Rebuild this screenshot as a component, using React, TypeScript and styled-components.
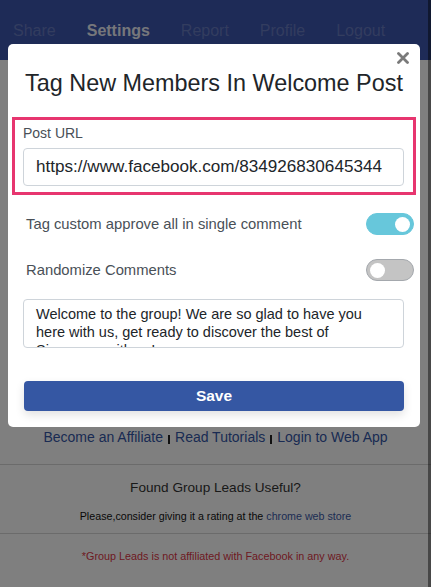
import React, { useState } from "react";
import styled, { createGlobalStyle } from "styled-components";

const GlobalStyle = createGlobalStyle`
  html, body {
    margin: 0;
    padding: 0;
    background: #ffffff;
  }
  body {
    font-family: "Liberation Sans", Arial, sans-serif;
    color: #212529;
    overflow: hidden;
  }
  * {
    box-sizing: border-box;
  }
`;

const Page = styled.div`
  width: 431px;
  height: 587px;
  position: relative;
  background: #ffffff;
`;

const NavBar = styled.nav`
  height: 60px;
  background: #3c56ae;
  display: flex;
  align-items: flex-end;
  padding: 0 0 20px 13px;
`;

const NavItem = styled.a<{ $active?: boolean }>`
  font-size: 16px;
  line-height: 18px;
  font-weight: ${(p) => (p.$active ? 700 : 400)};
  color: ${(p) => (p.$active ? "rgba(255, 255, 255, 0.92)" : "rgba(255, 255, 255, 0.22)")};
  text-decoration: none;
  margin-right: 31px;
`;

const PageBody = styled.main`
  padding-top: 367px;
  display: flex;
  flex-direction: column;
  align-items: center;
`;

const LinkRow = styled.div`
  font-size: 14px;
  display: flex;
  align-items: center;
  gap: 5px;
  height: 20px;
`;

const FooterLink = styled.a`
  color: #3456a6;
  text-decoration: none;
`;

const Divider = styled.span`
  display: inline-block;
  width: 2px;
  height: 9px;
  background: #222;
  margin-top: 5px;
`;

const Section = styled.section`
  width: 100%;
  border-top: 1px solid #d6d6d6;
  margin-top: 17px;
  padding: 14px 0 9px;
  text-align: center;
`;

const SectionTitle = styled.h3`
  margin: 0;
  font-size: 13.6px;
  font-weight: 400;
  color: #333;
  line-height: 17px;
`;

const SectionText = styled.p`
  margin: 12px 0 0;
  font-size: 10.7px;
  font-weight: 500;
  color: #111;
  line-height: 16px;
`;

const StoreLink = styled.a`
  color: #3a5aa8;
  text-decoration: none;
`;

const Disclaimer = styled.section`
  width: 100%;
  border-top: 1px solid #d6d6d6;
  padding-top: 16px;
  text-align: center;
  font-size: 10.8px;
  line-height: 13px;
  color: #dc3545;
`;

const Backdrop = styled.div`
  position: absolute;
  inset: 0;
  background: rgba(0, 0, 0, 0.5);
  border-right: 3px solid rgba(0, 0, 0, 0.44);
`;

const Modal = styled.div`
  position: absolute;
  left: 8px;
  top: 44px;
  width: 412px;
  height: 383px;
  background: #ffffff;
  border-radius: 5px;
  padding: 4px 4px 0;
  display: flex;
  flex-direction: column;
`;

const CloseRow = styled.div`
  display: flex;
  justify-content: flex-end;
  height: 20px;
  padding-right: 5px;
`;

const CloseButton = styled.button`
  border: none;
  background: none;
  padding: 0;
  width: 16px;
  height: 20px;
  display: flex;
  align-items: center;
  justify-content: center;
  cursor: pointer;
`;

const Title = styled.h2`
  margin: 1px 0 0;
  text-align: center;
  font-size: 23.4px;
  font-weight: 400;
  line-height: 28px;
  color: #212529;
`;

const Highlight = styled.div`
  margin-top: 20px;
  border: 3px solid #e7356f;
  padding: 3px 9px 6px 8px;
  height: 78px;
`;

const Label = styled.label`
  display: block;
  font-size: 14px;
  color: #495057;
  line-height: 20px;
`;

const TextInput = styled.input`
  display: block;
  width: 100%;
  height: 38px;
  margin-top: 5px;
  border: 1px solid #ced4da;
  border-radius: 4px;
  padding: 0 12px;
  font-family: inherit;
  font-size: 17.1px;
  color: #212529;
  outline: none;
`;

const Body = styled.div`
  padding: 0 2px 0 11px;
  display: flex;
  flex-direction: column;
`;

const ToggleRow = styled.div<{ $top: number }>`
  margin-top: ${(p) => p.$top}px;
  display: flex;
  align-items: center;
  justify-content: space-between;
  height: 22px;
  padding-left: 3px;
`;

const ToggleLabel = styled.span`
  font-size: 14.8px;
  color: #495057;
`;

const Switch = styled.button<{ $on: boolean }>`
  width: 48px;
  height: 22px;
  border-radius: 11px;
  border: 1.5px solid ${(p) => (p.$on ? "#67c7db" : "#a4a8ad")};
  background: ${(p) => (p.$on ? "#67c7db" : "#c4c4c4")};
  padding: 0 3px;
  display: flex;
  align-items: center;
  justify-content: ${(p) => (p.$on ? "flex-end" : "flex-start")};
  cursor: pointer;
`;

const Knob = styled.span`
  width: 15px;
  height: 15px;
  border-radius: 50%;
  background: #ffffff;
`;

const TextArea = styled.textarea`
  margin-top: 18px;
  width: 381px;
  height: 49px;
  border: 1px solid #ced4da;
  border-radius: 4px;
  padding: 5px 12px;
  font-family: inherit;
  font-size: 14.5px;
  line-height: 18px;
  color: #212529;
  resize: none;
  overflow: hidden;
  outline: none;
`;

const SaveButton = styled.button`
  margin-top: 33px;
  width: 380px;
  height: 30px;
  margin-left: 1px;
  border: none;
  border-radius: 4px;
  background: #3557a3;
  color: #ffffff;
  font-family: inherit;
  font-size: 15.5px;
  font-weight: 700;
  box-shadow: 0 4px 10px rgba(0, 0, 0, 0.12);
  cursor: pointer;
`;

const Toggle = ({ initial }: { initial: boolean }) => {
  const [on, setOn] = useState(initial);
  return (
    <Switch $on={on} onClick={() => setOn(!on)}>
      <Knob />
    </Switch>
  );
};

const App = () => {
  return (
    <Page>
      <GlobalStyle />
      <NavBar>
        <NavItem>Share</NavItem>
        <NavItem $active>Settings</NavItem>
        <NavItem>Report</NavItem>
        <NavItem>Profile</NavItem>
        <NavItem>Logout</NavItem>
      </NavBar>
      <PageBody>
        <LinkRow>
          <FooterLink>Become an Affiliate</FooterLink>
          <Divider />
          <FooterLink>Read Tutorials</FooterLink>
          <Divider />
          <FooterLink>Login to Web App</FooterLink>
        </LinkRow>
        <Section>
          <SectionTitle>Found Group Leads Useful?</SectionTitle>
          <SectionText>
            Please,consider giving it a rating at the{" "}
            <StoreLink>chrome web store</StoreLink>
          </SectionText>
        </Section>
        <Disclaimer>*Group Leads is not affiliated with Facebook in any way.</Disclaimer>
      </PageBody>
      <Backdrop />
      <Modal>
        <CloseRow>
          <CloseButton aria-label="Close">
            <svg width="12" height="12" viewBox="0 0 12 12">
              <path d="M1.5 1.5 L10.5 10.5 M10.5 1.5 L1.5 10.5" stroke="#7a7a7a" strokeWidth="2.8" strokeLinecap="round" />
            </svg>
          </CloseButton>
        </CloseRow>
        <Title>Tag New Members In Welcome Post</Title>
        <Highlight>
          <Label>Post URL</Label>
          <TextInput defaultValue="https://www.facebook.com/834926830645344" />
        </Highlight>
        <Body>
          <ToggleRow $top={18}>
            <ToggleLabel>Tag custom approve all in single comment</ToggleLabel>
            <Toggle initial={true} />
          </ToggleRow>
          <ToggleRow $top={24}>
            <ToggleLabel>Randomize Comments</ToggleLabel>
            <Toggle initial={false} />
          </ToggleRow>
          <TextArea
            defaultValue="Welcome to the group! We are so glad to have you here with us, get ready to discover the best of Singapore with us!"
          />
          <SaveButton>Save</SaveButton>
        </Body>
      </Modal>
    </Page>
  );
};

export default App;
